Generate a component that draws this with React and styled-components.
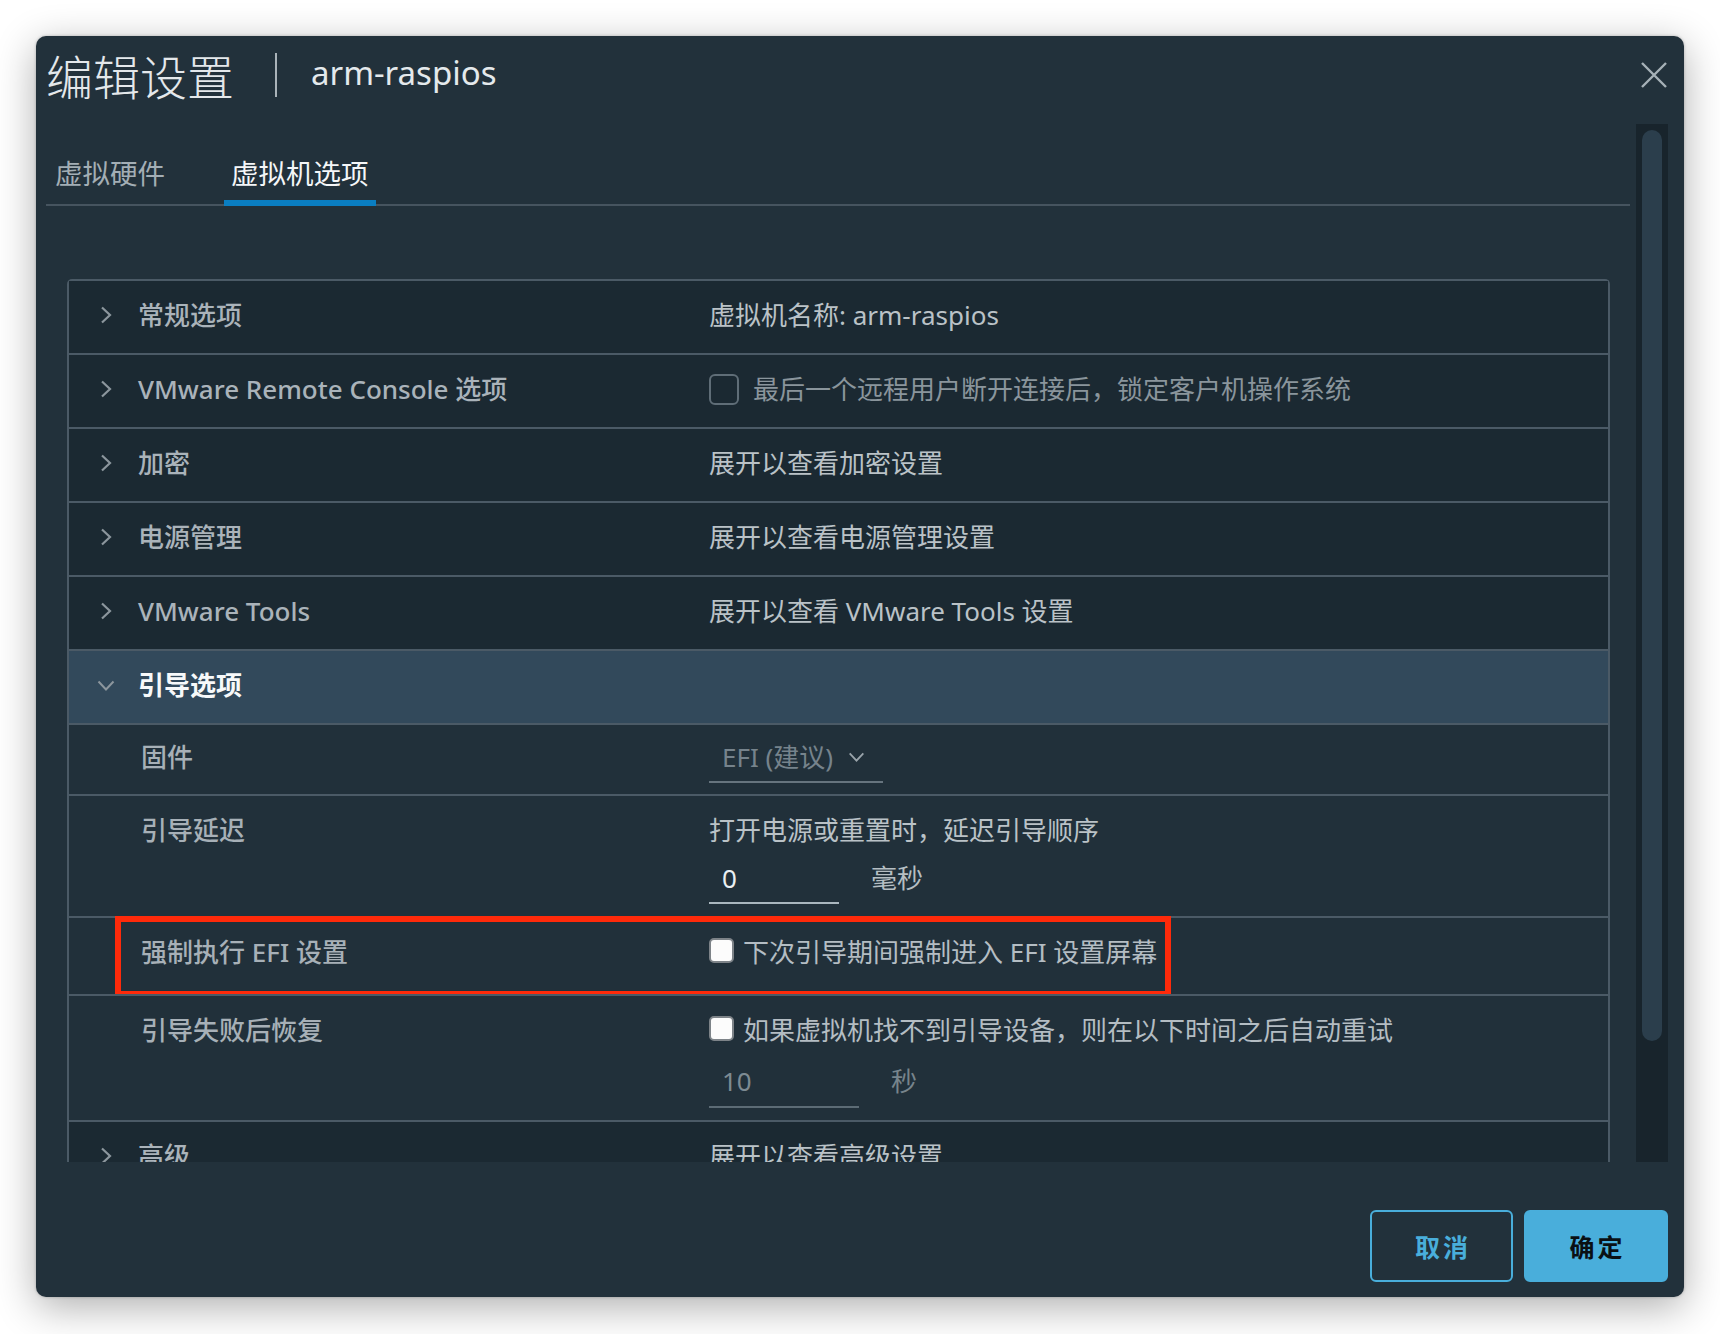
import React from "react";
import styled, { createGlobalStyle } from "styled-components";

const Global = createGlobalStyle`
  html, body { margin: 0; padding: 0; background: #ffffff; }
  body { font-family: "Noto Sans", "Noto Sans CJK SC", sans-serif; }
  * { box-sizing: border-box; }
`;

const FONT = `"Noto Sans", "Noto Sans CJK SC", sans-serif`;

const Page = styled.div`
  width: 1720px;
  height: 1334px;
  padding: 36px 36px 0 36px;
  background: #ffffff;
`;

const Modal = styled.div`
  width: 1648px;
  height: 1261px;
  background: #22313b;
  border-radius: 10px;
  box-shadow: 0 10px 40px rgba(0, 0, 0, 0.32), 0 0 3px rgba(0, 0, 0, 0.25);
  display: flex;
  flex-direction: column;
  overflow: hidden;
  font-family: ${FONT};
`;

const Header = styled.div`
  height: 88px;
  flex: none;
  display: flex;
  align-items: center;
  padding: 0 17px 11px 10px;
`;

const Title = styled.div`
  font-family: "Noto Sans CJK SC", sans-serif;
  font-size: 47px;
  font-weight: 300;
  line-height: 1;
  color: #e4e8eb;
`;

const TitleSep = styled.div`
  width: 2px;
  height: 44px;
  background: #aab3b9;
  margin: 0 34px 0 41px;
`;

const SubTitle = styled.div`
  font-size: 33px;
  line-height: 1;
  color: #e4e9ec;
  padding-bottom: 4px;
`;

const CloseBtn = styled.button`
  margin-left: auto;
  width: 26px;
  height: 26px;
  padding: 0;
  border: none;
  background: transparent;
  display: flex;
  cursor: pointer;
`;

const Body = styled.div`
  height: 1038px;
  flex: none;
  display: flex;
`;

const ScrollArea = styled.div`
  flex: 1;
  overflow: hidden;
  padding-left: 10px;
  margin-right: 6px;
`;

const Tabs = styled.div`
  height: 82px;
  display: flex;
  align-items: flex-end;
  gap: 52px;
  padding-left: 2px;
  border-bottom: 2px solid #46545f;
`;

const Tab = styled.div`
  font-family: "Noto Sans CJK SC", sans-serif;
  font-size: 27.5px;
  line-height: 36px;
  padding: 0 7px 10px 7px;
  border-bottom: 6px solid ${(p) => (p.$active ? "#0a7ec2" : "transparent")};
  margin-bottom: -2px;
  color: ${(p) => (p.$active ? "#f4f6f8" : "#a3aeb5")};
`;

const Track = styled.div`
  width: 32px;
  flex: none;
  margin-right: 16px;
  background: #18242c;
  padding: 6px;
`;

const Thumb = styled.div`
  height: 911px;
  border-radius: 10px;
  background: #2b3e4c;
`;

const Table = styled.div`
  margin: 73px 20px 0 21px;
  border: 2px solid #4b5a66;
  border-bottom: none;
  border-radius: 5px 5px 0 0;
`;

const Row = styled.div`
  box-sizing: content-box;
  position: relative;
  display: grid;
  grid-template-columns: 640px 1fr;
  align-items: ${(p) => (p.$sub ? "start" : "center")};
  min-height: ${(p) => (p.$sub ? "0" : "68px")};
  padding: ${(p) => (p.$sub ? `${p.$pt ?? 16}px 0 ${p.$pb ?? 12}px 0` : "0 0 4px 0")};
  background: ${(p) =>
    p.$open ? "#32495b" : p.$sub ? "#21303a" : "#1b2932"};
  & + & {
    border-top: 2px solid #4b5a66;
  }
  font-size: 26px;
  line-height: 36px;
`;

const HeadCell = styled.div`
  display: flex;
  align-items: center;
  padding-left: ${(p) => (p.$open ? "28px" : "31px")};
  gap: ${(p) => (p.$open ? "23px" : "26px")};
`;

const HeadLabel = styled.span`
  font-weight: ${(p) => (p.$open ? 700 : 500)};
  color: ${(p) => (p.$open ? "#f7f9fa" : "#aab3ba")};
`;

const SubLabel = styled.div`
  padding-left: 72px;
  font-weight: 500;
  color: #a7b0b7;
`;

const Value = styled.div`
  color: ${(p) => (p.$dim ? "#8a959c" : "#bac2c7")};
  display: flex;
  flex-direction: column;
  align-items: flex-start;
`;

const CheckLine = styled.div`
  display: flex;
  align-items: center;
  gap: ${(p) => (p.$outline ? "14px" : "9px")};
  color: ${(p) => (p.$dim ? "#8a959c" : "#b4bdc3")};
`;

const OutlineBox = styled.span`
  width: 30px;
  height: 31px;
  border: 2px solid #5f6d77;
  border-radius: 6px;
  flex: none;
`;

const WhiteBox = styled.span`
  width: 25px;
  height: 25px;
  background: #fcfcfc;
  border: 2px solid #7d8388;
  border-radius: 5px;
  flex: none;
  margin-top: -4px;
`;

const Select = styled.div`
  width: 174px;
  display: flex;
  align-items: center;
  gap: 15px;
  padding: 0 0 6px 13px;
  border-bottom: 2px solid #66747e;
  color: #76838c;
`;

const InputLine = styled.div`
  display: flex;
  align-items: flex-start;
  gap: 32px;
  margin-top: ${(p) => p.$mt}px;
`;

const FieldBox = styled.div`
  width: ${(p) => p.$w}px;
  padding: 0 0 ${(p) => p.$pb}px 13px;
  border-bottom: 2px solid ${(p) => (p.$disabled ? "#5c6b75" : "#aab7bf")};
  color: ${(p) => (p.$disabled ? "#7d8a92" : "#eaeff2")};
`;

const Unit = styled.span`
  color: ${(p) => (p.$disabled ? "#77848c" : "#b5bec3")};
`;

const Highlight = styled.div`
  position: absolute;
  left: 46px;
  top: -2px;
  width: 1056px;
  height: 81px;
  border: 6px solid #ff2a0a;
  pointer-events: none;
`;

const Footer = styled.div`
  flex: 1;
  display: flex;
  justify-content: flex-end;
  align-items: flex-start;
  gap: 11px;
  padding: 48px 16px 0 0;
`;

const Button = styled.button`
  width: ${(p) => (p.$primary ? "144px" : "143px")};
  height: 72px;
  border-radius: 6px;
  border: 2px solid #49aedb;
  background: ${(p) => (p.$primary ? "#49aedb" : "transparent")};
  color: ${(p) => (p.$primary ? "#0a1014" : "#49aedb")};
  font-family: "Noto Sans CJK SC", sans-serif;
  font-size: 25px;
  font-weight: 700;
  letter-spacing: 3px;
  padding: 0 0 0 3px;
  cursor: pointer;
`;

const ChevronRight = () => (
  <svg width="12" height="18" viewBox="0 0 12 18">
    <path d="M2 1.5 L10 9 L2 16.5" fill="none" stroke="#8c969d" strokeWidth="2.2" />
  </svg>
);

const ChevronDown = ({ color = "#8c969d", w = 18, h = 11 }) => (
  <svg width={w} height={h} viewBox="0 0 18 11">
    <path d="M1.5 1.5 L9 9.5 L16.5 1.5" fill="none" stroke={color} strokeWidth="2" />
  </svg>
);

const HeadRow = ({ label, children, open }) => (
  <Row $open={open}>
    <HeadCell $open={open}>
      {open ? <ChevronDown /> : <ChevronRight />}
      <HeadLabel $open={open}>{label}</HeadLabel>
    </HeadCell>
    <div>{children}</div>
  </Row>
);

export default function App() {
  return (
    <>
      <Global />
      <Page>
        <Modal>
          <Header>
            <Title>编辑设置</Title>
            <TitleSep />
            <SubTitle>arm-raspios</SubTitle>
            <CloseBtn aria-label="close">
              <svg width="26" height="26" viewBox="0 0 26 26">
                <path d="M1 1 L25 25 M25 1 L1 25" stroke="#a6b1b7" strokeWidth="2.4" />
              </svg>
            </CloseBtn>
          </Header>
          <Body>
            <ScrollArea>
              <Tabs>
                <Tab>虚拟硬件</Tab>
                <Tab $active>虚拟机选项</Tab>
              </Tabs>
              <Table>
                <HeadRow label="常规选项">
                  <Value>虚拟机名称: arm-raspios</Value>
                </HeadRow>
                <HeadRow label="VMware Remote Console 选项">
                  <CheckLine $outline $dim>
                    <OutlineBox />
                    最后一个远程用户断开连接后，锁定客户机操作系统
                  </CheckLine>
                </HeadRow>
                <HeadRow label="加密">
                  <Value>展开以查看加密设置</Value>
                </HeadRow>
                <HeadRow label="电源管理">
                  <Value>展开以查看电源管理设置</Value>
                </HeadRow>
                <HeadRow label="VMware Tools">
                  <Value>展开以查看 VMware Tools 设置</Value>
                </HeadRow>
                <HeadRow label="引导选项" open />
                <Row $sub $pt={14} $pb={11}>
                  <SubLabel>固件</SubLabel>
                  <Value>
                    <Select>
                      <span>EFI (建议)</span>
                      <ChevronDown color="#9aa4ab" w={17} h={10} />
                    </Select>
                  </Value>
                </Row>
                <Row $sub $pb={12}>
                  <SubLabel>引导延迟</SubLabel>
                  <Value>
                    <span>打开电源或重置时，延迟引导顺序</span>
                    <InputLine $mt={11.5}>
                      <FieldBox $w={130} $pb={6.5}>0</FieldBox>
                      <Unit>毫秒</Unit>
                    </InputLine>
                  </Value>
                </Row>
                <Row $sub $pb={24}>
                  <SubLabel>强制执行 EFI 设置</SubLabel>
                  <Value>
                    <CheckLine>
                      <WhiteBox />
                      下次引导期间强制进入 EFI 设置屏幕
                    </CheckLine>
                  </Value>
                  <Highlight />
                </Row>
                <Row $sub $pb={12}>
                  <SubLabel>引导失败后恢复</SubLabel>
                  <Value>
                    <CheckLine>
                      <WhiteBox />
                      如果虚拟机找不到引导设备，则在以下时间之后自动重试
                    </CheckLine>
                    <InputLine $mt={15}>
                      <FieldBox $w={150} $pb={7} $disabled>10</FieldBox>
                      <Unit $disabled>秒</Unit>
                    </InputLine>
                  </Value>
                </Row>
                <HeadRow label="高级">
                  <Value>展开以查看高级设置</Value>
                </HeadRow>
              </Table>
            </ScrollArea>
            <Track>
              <Thumb />
            </Track>
          </Body>
          <Footer>
            <Button>取消</Button>
            <Button $primary>确定</Button>
          </Footer>
        </Modal>
      </Page>
    </>
  );
}
